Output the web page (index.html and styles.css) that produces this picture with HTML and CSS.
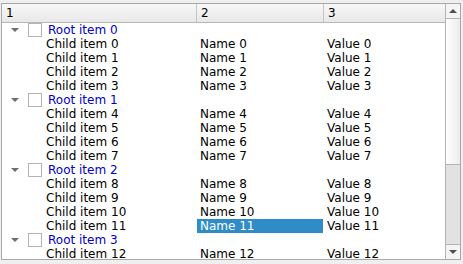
FILE: index.html
```html
<!DOCTYPE html>
<html>
    <head>
        <link rel="stylesheet" href="styles.css">
    </head>
    <body>
        <div class="tree">
            <div class="view">
                <div class="header">
                    <div class="hcell c1">1</div>
                    <div class="hcell c2">2</div>
                    <div class="hcell c3">3</div>
                </div>
                <div class="rows">
                    <div class="row root"><div class="cell c1"><span class="arrow"></span><span class="check"></span><span class="label">Root item 0</span></div><div class="cell c2"></div><div class="cell c3"></div></div>
                    <div class="row"><div class="cell c1 child">Child item 0</div><div class="cell c2">Name 0</div><div class="cell c3">Value 0</div></div>
                    <div class="row"><div class="cell c1 child">Child item 1</div><div class="cell c2">Name 1</div><div class="cell c3">Value 1</div></div>
                    <div class="row"><div class="cell c1 child">Child item 2</div><div class="cell c2">Name 2</div><div class="cell c3">Value 2</div></div>
                    <div class="row"><div class="cell c1 child">Child item 3</div><div class="cell c2">Name 3</div><div class="cell c3">Value 3</div></div>
                    <div class="row root"><div class="cell c1"><span class="arrow"></span><span class="check"></span><span class="label">Root item 1</span></div><div class="cell c2"></div><div class="cell c3"></div></div>
                    <div class="row"><div class="cell c1 child">Child item 4</div><div class="cell c2">Name 4</div><div class="cell c3">Value 4</div></div>
                    <div class="row"><div class="cell c1 child">Child item 5</div><div class="cell c2">Name 5</div><div class="cell c3">Value 5</div></div>
                    <div class="row"><div class="cell c1 child">Child item 6</div><div class="cell c2">Name 6</div><div class="cell c3">Value 6</div></div>
                    <div class="row"><div class="cell c1 child">Child item 7</div><div class="cell c2">Name 7</div><div class="cell c3">Value 7</div></div>
                    <div class="row root"><div class="cell c1"><span class="arrow"></span><span class="check"></span><span class="label">Root item 2</span></div><div class="cell c2"></div><div class="cell c3"></div></div>
                    <div class="row"><div class="cell c1 child">Child item 8</div><div class="cell c2">Name 8</div><div class="cell c3">Value 8</div></div>
                    <div class="row"><div class="cell c1 child">Child item 9</div><div class="cell c2">Name 9</div><div class="cell c3">Value 9</div></div>
                    <div class="row"><div class="cell c1 child">Child item 10</div><div class="cell c2">Name 10</div><div class="cell c3">Value 10</div></div>
                    <div class="row"><div class="cell c1 child">Child item 11</div><div class="cell c2 selected">Name 11</div><div class="cell c3">Value 11</div></div>
                    <div class="row root"><div class="cell c1"><span class="arrow"></span><span class="check"></span><span class="label">Root item 3</span></div><div class="cell c2"></div><div class="cell c3"></div></div>
                    <div class="row"><div class="cell c1 child">Child item 12</div><div class="cell c2">Name 12</div><div class="cell c3">Value 12</div></div>
                </div>
            </div>
            <div class="scrollbar">
                <div class="sbtn up"><span class="tri-up"></span></div>
                <div class="track">
                    <div class="handle"></div>
                </div>
                <div class="sbtn down"><span class="tri-down"></span></div>
            </div>
        </div>
    </body>
</html>
```

FILE: styles.css
```css
body {
    margin: 0;
    background-color: #efefef;
    font-family: "DejaVu Sans", sans-serif;
    font-size: 12px;
    color: #000;
}
.tree {
    margin: 3px 2px 0 1px;
    height: 255px;
    border: 1px solid #a8a8a8;
    background-color: white;
    display: flex;
}
.view {
    flex: 1;
    overflow: hidden;
    display: flex;
    flex-direction: column;
}
.header {
    display: flex;
    height: 18px;
    flex-shrink: 0;
    border-bottom: 1px solid #b8b8b8;
    background: linear-gradient(#f8f8f8, #e8e8e8);
}
.hcell {
    line-height: 18px;
    padding-left: 4px;
    box-sizing: border-box;
    border-right: 1px solid #c4c4c4;
}
.c1 {
    width: 195px;
    flex-shrink: 0;
}
.c2 {
    width: 127px;
    flex-shrink: 0;
}
.c3 {
    flex: 1;
}
.hcell.c3 {
    border-right: none;
}
.rows {
    display: flex;
    flex-direction: column;
}
.row {
    display: flex;
    height: 14px;
    flex-shrink: 0;
}
.cell {
    line-height: 14px;
    white-space: nowrap;
    box-sizing: border-box;
    padding-left: 3px;
}
.cell.c1 {
    display: flex;
    align-items: center;
    padding-left: 0;
}
.cell.child {
    padding-left: 44px;
}
.selected {
    background-color: #308cc6;
    color: white;
    border-right: 1px solid white;
}
.arrow {
    width: 0;
    height: 0;
    margin-left: 9px;
    border-left: 4px solid transparent;
    border-right: 4px solid transparent;
    border-top: 4px solid #6e6e6e;
}
.check {
    width: 12px;
    height: 12px;
    margin-left: 9px;
    border: 1px solid #b4b4b4;
    background-color: white;
}
.label {
    margin-left: 6px;
    color: #0000c8;
}
.scrollbar {
    width: 14px;
    border-left: 1px solid #b4b4b4;
    display: flex;
    flex-direction: column;
    background-color: #e2e2e2;
}
.sbtn {
    height: 14px;
    flex-shrink: 0;
    display: flex;
    align-items: center;
    justify-content: center;
    background-color: #f4f4f4;
}
.up {
    border-bottom: 1px solid #b4b4b4;
}
.down {
    border-top: 1px solid #b4b4b4;
}
.tri-up {
    border-left: 4px solid transparent;
    border-right: 4px solid transparent;
    border-bottom: 4px solid #505050;
}
.tri-down {
    border-left: 4px solid transparent;
    border-right: 4px solid transparent;
    border-top: 4px solid #505050;
}
.track {
    flex: 1;
}
.handle {
    height: 145px;
    border-bottom: 1px solid #b4b4b4;
    background: linear-gradient(to right, #ffffff, #ececec);
}
```
